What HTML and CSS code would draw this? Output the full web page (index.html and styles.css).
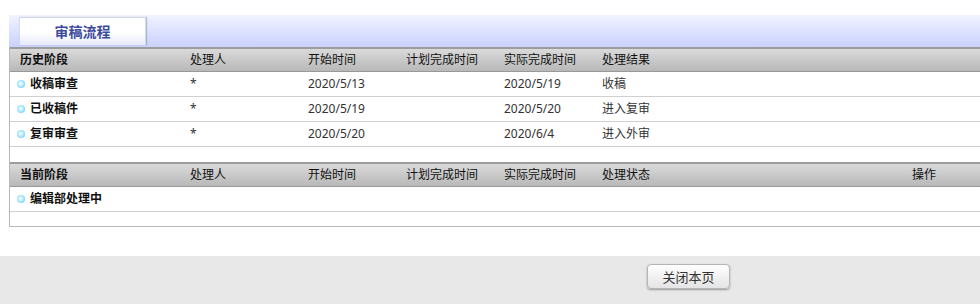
FILE: index.html
```html
<!DOCTYPE html>
<html>
<head>
<meta http-equiv="Content-Type" content="text/html; charset=utf-8"/>
<title>审稿流程</title>
<link rel="stylesheet" href="styles.css">
</head>
<body>

<div class="tabbar">
  <div class="tab">审稿流程</div>
</div>

<div class="panel">
  <table class="flow">
    <colgroup>
      <col class="c-stage"><col class="c-user"><col class="c-date"><col class="c-date"><col class="c-date"><col>
    </colgroup>
    <tr class="head">
      <th>历史阶段</th><th>处理人</th><th>开始时间</th><th>计划完成时间</th><th>实际完成时间</th><th>处理结果</th>
    </tr>
    <tr>
      <td class="stage"><span class="dot"></span>收稿审查</td><td>*</td><td>2020/5/13</td><td></td><td>2020/5/19</td><td>收稿</td>
    </tr>
    <tr>
      <td class="stage"><span class="dot"></span>已收稿件</td><td>*</td><td>2020/5/19</td><td></td><td>2020/5/20</td><td>进入复审</td>
    </tr>
    <tr>
      <td class="stage"><span class="dot"></span>复审审查</td><td>*</td><td>2020/5/20</td><td></td><td>2020/6/4</td><td>进入外审</td>
    </tr>
    <tr class="spacer"><td colspan="6"></td></tr>
  </table>

  <table class="flow">
    <colgroup>
      <col class="c-stage"><col class="c-user"><col class="c-date"><col class="c-date"><col class="c-date"><col class="c-state"><col>
    </colgroup>
    <tr class="head">
      <th>当前阶段</th><th>处理人</th><th>开始时间</th><th>计划完成时间</th><th>实际完成时间</th><th>处理状态</th><th>操作</th>
    </tr>
    <tr>
      <td class="stage"><span class="dot"></span>编辑部处理中</td><td></td><td></td><td></td><td></td><td></td><td></td>
    </tr>
    <tr class="spacer end"><td colspan="7"></td></tr>
  </table>
</div>

<div class="footer">
  <button class="btn" type="button">关闭本页</button>
</div>

</body>
</html>
```

FILE: styles.css
```css
body {
  margin: 0;
  background-color: white;
  font-family: "Noto Sans", "Noto Sans CJK SC", sans-serif;
  font-size: 12px;
  color: #222;
  overflow: hidden;
}

/* tab strip */
.tabbar {
  margin: 15px 0 0 9px;
  height: 32px;
  box-sizing: border-box;
  padding: 2px 0 0 10px;
  background: linear-gradient(to bottom, #f1f3ff, #c9d1fd);
}

.tab {
  width: 127px;
  height: 28px;
  box-sizing: border-box;
  border: 1px solid #d6d9ea;
  border-bottom: none;
  box-shadow: 1px 0 1px rgba(90, 100, 150, 0.35);
  background: linear-gradient(to bottom, #ffffff 55%, #e6e9fb);
  text-align: center;
  line-height: 27px;
  font-size: 14px;
  font-weight: bold;
  color: #3d4b9c;
}

/* stage tables */
.panel {
  margin-left: 9px;
  border-left: 1px solid #b8b8b8;
  border-bottom: 1px solid #b8b8b8;
}

.flow {
  width: 100%;
  border-collapse: collapse;
  table-layout: fixed;
}

.c-stage { width: 170px; }
.c-user  { width: 118px; }
.c-date  { width: 98px; }
.c-state { width: 310px; }

.flow th,
.flow td {
  padding: 0 0 0 10px;
  text-align: left;
  white-space: nowrap;
  overflow: hidden;
  line-height: 16px;
}

.head th {
  height: 22px;
  font-weight: normal;
  color: #111;
  background: linear-gradient(to bottom, #dadada, #b8b8b8);
  border-top: 2px solid #9c9c9c;
  border-bottom: 1px solid #999;
}

.head th:first-child {
  font-weight: bold;
}

.flow td {
  height: 24px;
  border-bottom: 1px solid #d0d0d0;
  color: #333;
}

.flow td.stage {
  padding-left: 7px;
  font-weight: bold;
  color: #111;
}

.dot {
  display: inline-block;
  width: 8px;
  height: 8px;
  margin-right: 5px;
  border-radius: 50%;
  vertical-align: middle;
  position: relative;
  top: -1px;
  background: radial-gradient(circle at 45% 45%, #ffffff 0, #a6e6ff 50%, #49b5e4 100%);
}

.flow .spacer td {
  height: 15px;
  padding: 0;
  border-bottom: none;
}

.flow .spacer.end td {
  height: 14px;
}

/* bottom bar */
.footer {
  margin-top: 29px;
  height: 40px;
  padding: 8px 0 0 647px;
  background-color: #e8e8e8;
}

.btn {
  width: 83px;
  height: 25px;
  border: 1px solid #b5b5b5;
  border-radius: 4px;
  background: linear-gradient(to bottom, #ffffff, #e4e4e4);
  box-shadow: 0 1px 2px rgba(0, 0, 0, 0.35);
  font-family: "Noto Sans CJK SC", sans-serif;
  font-size: 13px;
  color: #333;
  padding: 0;
}
```
